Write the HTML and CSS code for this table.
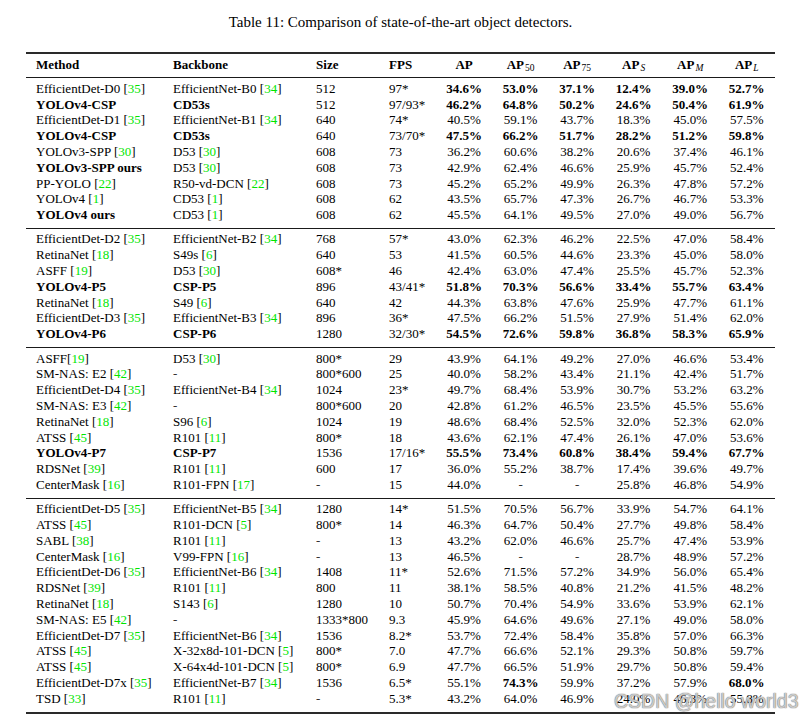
FILE: index.html
```html
<!DOCTYPE html>
<html lang="en">
<head>
<meta charset="utf-8">
<title>Table 11</title>
<link rel="stylesheet" href="styles.css">
</head>
<body>
<div class="page">
  <div class="caption">Table 11: Comparison of state-of-the-art object detectors.</div>
  <table class="results">
    <colgroup>
      <col class="w-method"><col class="w-backbone"><col class="w-size"><col class="w-fps">
      <col class="w-ap"><col class="w-ap"><col class="w-ap"><col class="w-ap"><col class="w-ap"><col class="w-ap">
    </colgroup>
    <thead>
      <tr>
        <th>Method</th><th>Backbone</th><th>Size</th><th>FPS</th>
        <th class="num">AP</th>
        <th class="num">AP<sub>50</sub></th>
        <th class="num">AP<sub>75</sub></th>
        <th class="num">AP<sub class="it">S</sub></th>
        <th class="num">AP<sub class="it">M</sub></th>
        <th class="num">AP<sub class="it">L</sub></th>
      </tr>
    </thead>
    <tbody>
      <tr><td>EfficientDet-D0 [<span class="ref">35</span>]</td><td>EfficientNet-B0 [<span class="ref">34</span>]</td><td>512</td><td>97*</td><td class="num b">34.6%</td><td class="num b">53.0%</td><td class="num b">37.1%</td><td class="num b">12.4%</td><td class="num b">39.0%</td><td class="num b">52.7%</td></tr>
      <tr><td class="b">YOLOv4-CSP</td><td class="b">CD53s</td><td>512</td><td>97/93*</td><td class="num b">46.2%</td><td class="num b">64.8%</td><td class="num b">50.2%</td><td class="num b">24.6%</td><td class="num b">50.4%</td><td class="num b">61.9%</td></tr>
      <tr><td>EfficientDet-D1 [<span class="ref">35</span>]</td><td>EfficientNet-B1 [<span class="ref">34</span>]</td><td>640</td><td>74*</td><td class="num">40.5%</td><td class="num">59.1%</td><td class="num">43.7%</td><td class="num">18.3%</td><td class="num">45.0%</td><td class="num">57.5%</td></tr>
      <tr><td class="b">YOLOv4-CSP</td><td class="b">CD53s</td><td>640</td><td>73/70*</td><td class="num b">47.5%</td><td class="num b">66.2%</td><td class="num b">51.7%</td><td class="num b">28.2%</td><td class="num b">51.2%</td><td class="num b">59.8%</td></tr>
      <tr><td>YOLOv3-SPP [<span class="ref">30</span>]</td><td>D53 [<span class="ref">30</span>]</td><td>608</td><td>73</td><td class="num">36.2%</td><td class="num">60.6%</td><td class="num">38.2%</td><td class="num">20.6%</td><td class="num">37.4%</td><td class="num">46.1%</td></tr>
      <tr><td class="b">YOLOv3-SPP ours</td><td>D53 [<span class="ref">30</span>]</td><td>608</td><td>73</td><td class="num">42.9%</td><td class="num">62.4%</td><td class="num">46.6%</td><td class="num">25.9%</td><td class="num">45.7%</td><td class="num">52.4%</td></tr>
      <tr><td>PP-YOLO [<span class="ref">22</span>]</td><td>R50-vd-DCN [<span class="ref">22</span>]</td><td>608</td><td>73</td><td class="num">45.2%</td><td class="num">65.2%</td><td class="num">49.9%</td><td class="num">26.3%</td><td class="num">47.8%</td><td class="num">57.2%</td></tr>
      <tr><td>YOLOv4 [<span class="ref">1</span>]</td><td>CD53 [<span class="ref">1</span>]</td><td>608</td><td>62</td><td class="num">43.5%</td><td class="num">65.7%</td><td class="num">47.3%</td><td class="num">26.7%</td><td class="num">46.7%</td><td class="num">53.3%</td></tr>
      <tr><td class="b">YOLOv4 ours</td><td>CD53 [<span class="ref">1</span>]</td><td>608</td><td>62</td><td class="num">45.5%</td><td class="num">64.1%</td><td class="num">49.5%</td><td class="num">27.0%</td><td class="num">49.0%</td><td class="num">56.7%</td></tr>
    </tbody>
    <tbody>
      <tr><td>EfficientDet-D2 [<span class="ref">35</span>]</td><td>EfficientNet-B2 [<span class="ref">34</span>]</td><td>768</td><td>57*</td><td class="num">43.0%</td><td class="num">62.3%</td><td class="num">46.2%</td><td class="num">22.5%</td><td class="num">47.0%</td><td class="num">58.4%</td></tr>
      <tr><td>RetinaNet [<span class="ref">18</span>]</td><td>S49s [<span class="ref">6</span>]</td><td>640</td><td>53</td><td class="num">41.5%</td><td class="num">60.5%</td><td class="num">44.6%</td><td class="num">23.3%</td><td class="num">45.0%</td><td class="num">58.0%</td></tr>
      <tr><td>ASFF [<span class="ref">19</span>]</td><td>D53 [<span class="ref">30</span>]</td><td>608*</td><td>46</td><td class="num">42.4%</td><td class="num">63.0%</td><td class="num">47.4%</td><td class="num">25.5%</td><td class="num">45.7%</td><td class="num">52.3%</td></tr>
      <tr><td class="b">YOLOv4-P5</td><td class="b">CSP-P5</td><td>896</td><td>43/41*</td><td class="num b">51.8%</td><td class="num b">70.3%</td><td class="num b">56.6%</td><td class="num b">33.4%</td><td class="num b">55.7%</td><td class="num b">63.4%</td></tr>
      <tr><td>RetinaNet [<span class="ref">18</span>]</td><td>S49 [<span class="ref">6</span>]</td><td>640</td><td>42</td><td class="num">44.3%</td><td class="num">63.8%</td><td class="num">47.6%</td><td class="num">25.9%</td><td class="num">47.7%</td><td class="num">61.1%</td></tr>
      <tr><td>EfficientDet-D3 [<span class="ref">35</span>]</td><td>EfficientNet-B3 [<span class="ref">34</span>]</td><td>896</td><td>36*</td><td class="num">47.5%</td><td class="num">66.2%</td><td class="num">51.5%</td><td class="num">27.9%</td><td class="num">51.4%</td><td class="num">62.0%</td></tr>
      <tr><td class="b">YOLOv4-P6</td><td class="b">CSP-P6</td><td>1280</td><td>32/30*</td><td class="num b">54.5%</td><td class="num b">72.6%</td><td class="num b">59.8%</td><td class="num b">36.8%</td><td class="num b">58.3%</td><td class="num b">65.9%</td></tr>
    </tbody>
    <tbody>
      <tr><td>ASFF[<span class="ref">19</span>]</td><td>D53 [<span class="ref">30</span>]</td><td>800*</td><td>29</td><td class="num">43.9%</td><td class="num">64.1%</td><td class="num">49.2%</td><td class="num">27.0%</td><td class="num">46.6%</td><td class="num">53.4%</td></tr>
      <tr><td>SM-NAS: E2 [<span class="ref">42</span>]</td><td class="dash">-</td><td>800*600</td><td>25</td><td class="num">40.0%</td><td class="num">58.2%</td><td class="num">43.4%</td><td class="num">21.1%</td><td class="num">42.4%</td><td class="num">51.7%</td></tr>
      <tr><td>EfficientDet-D4 [<span class="ref">35</span>]</td><td>EfficientNet-B4 [<span class="ref">34</span>]</td><td>1024</td><td>23*</td><td class="num">49.7%</td><td class="num">68.4%</td><td class="num">53.9%</td><td class="num">30.7%</td><td class="num">53.2%</td><td class="num">63.2%</td></tr>
      <tr><td>SM-NAS: E3 [<span class="ref">42</span>]</td><td class="dash">-</td><td>800*600</td><td>20</td><td class="num">42.8%</td><td class="num">61.2%</td><td class="num">46.5%</td><td class="num">23.5%</td><td class="num">45.5%</td><td class="num">55.6%</td></tr>
      <tr><td>RetinaNet [<span class="ref">18</span>]</td><td>S96 [<span class="ref">6</span>]</td><td>1024</td><td>19</td><td class="num">48.6%</td><td class="num">68.4%</td><td class="num">52.5%</td><td class="num">32.0%</td><td class="num">52.3%</td><td class="num">62.0%</td></tr>
      <tr><td>ATSS [<span class="ref">45</span>]</td><td>R101 [<span class="ref">11</span>]</td><td>800*</td><td>18</td><td class="num">43.6%</td><td class="num">62.1%</td><td class="num">47.4%</td><td class="num">26.1%</td><td class="num">47.0%</td><td class="num">53.6%</td></tr>
      <tr><td class="b">YOLOv4-P7</td><td class="b">CSP-P7</td><td>1536</td><td>17/16*</td><td class="num b">55.5%</td><td class="num b">73.4%</td><td class="num b">60.8%</td><td class="num b">38.4%</td><td class="num b">59.4%</td><td class="num b">67.7%</td></tr>
      <tr><td>RDSNet [<span class="ref">39</span>]</td><td>R101 [<span class="ref">11</span>]</td><td>600</td><td>17</td><td class="num">36.0%</td><td class="num">55.2%</td><td class="num">38.7%</td><td class="num">17.4%</td><td class="num">39.6%</td><td class="num">49.7%</td></tr>
      <tr><td>CenterMask [<span class="ref">16</span>]</td><td>R101-FPN [<span class="ref">17</span>]</td><td class="dash">-</td><td>15</td><td class="num">44.0%</td><td class="num dash">-</td><td class="num dash">-</td><td class="num">25.8%</td><td class="num">46.8%</td><td class="num">54.9%</td></tr>
    </tbody>
    <tbody>
      <tr><td>EfficientDet-D5 [<span class="ref">35</span>]</td><td>EfficientNet-B5 [<span class="ref">34</span>]</td><td>1280</td><td>14*</td><td class="num">51.5%</td><td class="num">70.5%</td><td class="num">56.7%</td><td class="num">33.9%</td><td class="num">54.7%</td><td class="num">64.1%</td></tr>
      <tr><td>ATSS [<span class="ref">45</span>]</td><td>R101-DCN [<span class="ref">5</span>]</td><td>800*</td><td>14</td><td class="num">46.3%</td><td class="num">64.7%</td><td class="num">50.4%</td><td class="num">27.7%</td><td class="num">49.8%</td><td class="num">58.4%</td></tr>
      <tr><td>SABL [<span class="ref">38</span>]</td><td>R101 [<span class="ref">11</span>]</td><td class="dash">-</td><td>13</td><td class="num">43.2%</td><td class="num">62.0%</td><td class="num">46.6%</td><td class="num">25.7%</td><td class="num">47.4%</td><td class="num">53.9%</td></tr>
      <tr><td>CenterMask [<span class="ref">16</span>]</td><td>V99-FPN [<span class="ref">16</span>]</td><td class="dash">-</td><td>13</td><td class="num">46.5%</td><td class="num dash">-</td><td class="num dash">-</td><td class="num">28.7%</td><td class="num">48.9%</td><td class="num">57.2%</td></tr>
      <tr><td>EfficientDet-D6 [<span class="ref">35</span>]</td><td>EfficientNet-B6 [<span class="ref">34</span>]</td><td>1408</td><td>11*</td><td class="num">52.6%</td><td class="num">71.5%</td><td class="num">57.2%</td><td class="num">34.9%</td><td class="num">56.0%</td><td class="num">65.4%</td></tr>
      <tr><td>RDSNet [<span class="ref">39</span>]</td><td>R101 [<span class="ref">11</span>]</td><td>800</td><td>11</td><td class="num">38.1%</td><td class="num">58.5%</td><td class="num">40.8%</td><td class="num">21.2%</td><td class="num">41.5%</td><td class="num">48.2%</td></tr>
      <tr><td>RetinaNet [<span class="ref">18</span>]</td><td>S143 [<span class="ref">6</span>]</td><td>1280</td><td>10</td><td class="num">50.7%</td><td class="num">70.4%</td><td class="num">54.9%</td><td class="num">33.6%</td><td class="num">53.9%</td><td class="num">62.1%</td></tr>
      <tr><td>SM-NAS: E5 [<span class="ref">42</span>]</td><td class="dash">-</td><td>1333*800</td><td>9.3</td><td class="num">45.9%</td><td class="num">64.6%</td><td class="num">49.6%</td><td class="num">27.1%</td><td class="num">49.0%</td><td class="num">58.0%</td></tr>
      <tr><td>EfficientDet-D7 [<span class="ref">35</span>]</td><td>EfficientNet-B6 [<span class="ref">34</span>]</td><td>1536</td><td>8.2*</td><td class="num">53.7%</td><td class="num">72.4%</td><td class="num">58.4%</td><td class="num">35.8%</td><td class="num">57.0%</td><td class="num">66.3%</td></tr>
      <tr><td>ATSS [<span class="ref">45</span>]</td><td>X-32x8d-101-DCN [<span class="ref">5</span>]</td><td>800*</td><td>7.0</td><td class="num">47.7%</td><td class="num">66.6%</td><td class="num">52.1%</td><td class="num">29.3%</td><td class="num">50.8%</td><td class="num">59.7%</td></tr>
      <tr><td>ATSS [<span class="ref">45</span>]</td><td>X-64x4d-101-DCN [<span class="ref">5</span>]</td><td>800*</td><td>6.9</td><td class="num">47.7%</td><td class="num">66.5%</td><td class="num">51.9%</td><td class="num">29.7%</td><td class="num">50.8%</td><td class="num">59.4%</td></tr>
      <tr><td>EfficientDet-D7x [<span class="ref">35</span>]</td><td>EfficientNet-B7 [<span class="ref">34</span>]</td><td>1536</td><td>6.5*</td><td class="num">55.1%</td><td class="num b">74.3%</td><td class="num">59.9%</td><td class="num">37.2%</td><td class="num">57.9%</td><td class="num b">68.0%</td></tr>
      <tr><td>TSD [<span class="ref">33</span>]</td><td>R101 [<span class="ref">11</span>]</td><td class="dash">-</td><td>5.3*</td><td class="num">43.2%</td><td class="num">64.0%</td><td class="num">46.9%</td><td class="num">24.0%</td><td class="num">46.3%</td><td class="num">55.8%</td></tr>
    </tbody>
  </table>
</div>
<div class="watermark">CSDN @hello world3</div>
</body>
</html>
```

FILE: styles.css
```css
* { box-sizing: border-box; }

html, body {
  margin: 0;
  padding: 0;
  background: #ffffff;
}

body {
  position: relative;
  width: 808px;
  height: 718px;
  overflow: hidden;
  font-family: "Liberation Serif", "Times New Roman", serif;
  color: #000000;
}

.page {
  padding: 13px 0 0 26px;
}

.caption {
  width: 749px;
  text-align: center;
  font-size: 15px;
  line-height: 18px;
  margin: 0 0 21px;
}

.results {
  width: 749px;
  table-layout: fixed;
  border-collapse: collapse;
  font-size: 13px;
  line-height: 15.8px;
}

.w-method { width: 137px; }
.w-backbone { width: 143px; }
.w-size { width: 73px; }
.w-fps { width: 56.75px; }
.w-ap { width: 56.5px; }

.results th,
.results td {
  padding: 0 10px;
  text-align: left;
  white-space: nowrap;
  font-weight: normal;
  vertical-align: middle;
}

.results th {
  font-weight: bold;
  padding-top: 2.5px;
  padding-bottom: 5px;
}

.results thead {
  border-top: 2px solid #2a2a2a;
  border-bottom: 1px solid #1a1a1a;
}

.results tbody {
  border-bottom: 1px solid #1a1a1a;
}

.results tbody:last-child {
  border-bottom: 2px solid #2a2a2a;
}

.results tbody tr:first-child td {
  padding-top: 2.5px;
}

.results tbody tr:last-child td {
  padding-bottom: 5px;
}

.results .num {
  text-align: center;
  padding-left: 0;
  padding-right: 0;
}

.results .b {
  font-weight: bold;
}

.results sub {
  font-weight: normal;
  font-size: 9.5px;
  line-height: 0;
  vertical-align: -2px;
  margin-left: 1px;
}

.results sub.it {
  font-style: italic;
}

.ref {
  color: #00e600;
}

.dash {
  color: #333333;
}

.watermark {
  position: absolute;
  left: 614px;
  top: 691px;
  font-family: "Liberation Sans", Arial, sans-serif;
  font-size: 19.5px;
  line-height: 20px;
  white-space: nowrap;
  color: rgba(255, 255, 255, 0.65);
  text-shadow: 0 0 1px #6f6f6f, 0 0 1px #6f6f6f;
}
```
